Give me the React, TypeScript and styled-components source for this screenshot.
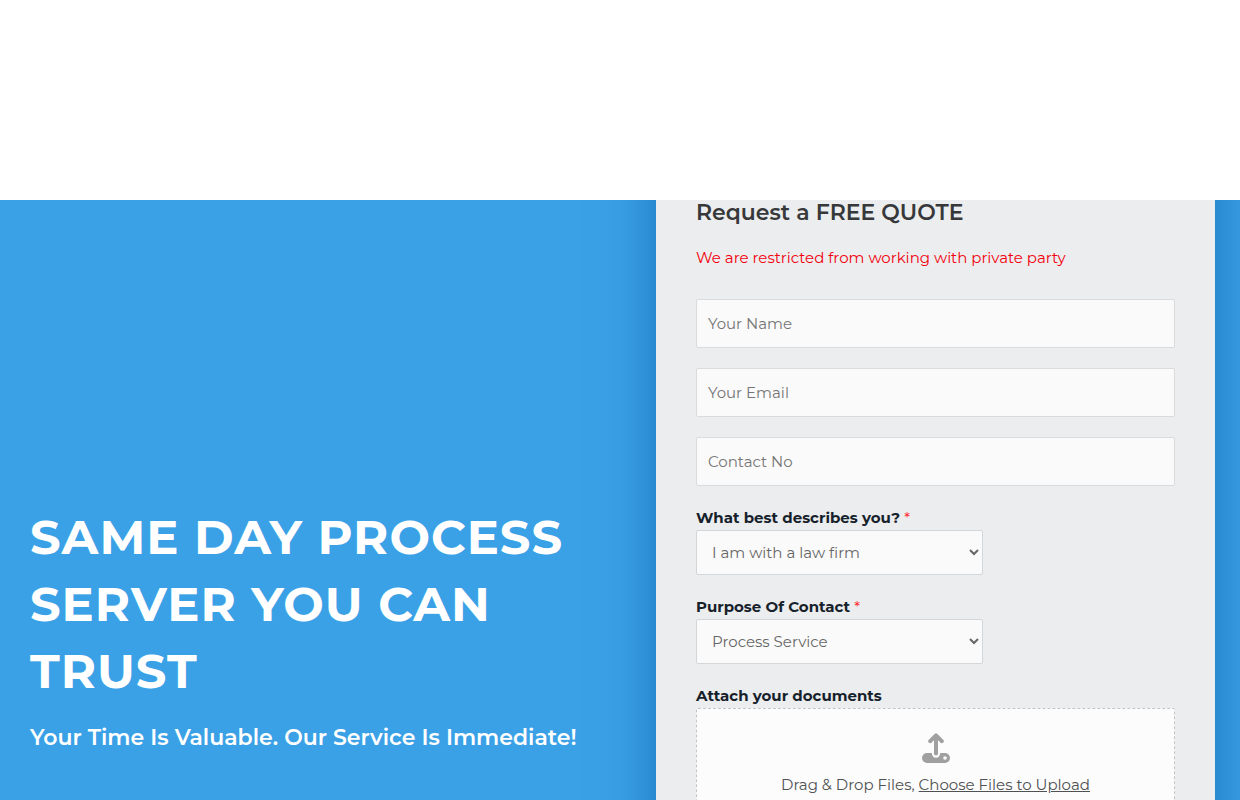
import React from "react";
import styled, { createGlobalStyle } from "styled-components";

const GlobalStyle = createGlobalStyle`
  *, *::before, *::after { box-sizing: border-box; }
  body {
    margin: 0;
    background: #ffffff;
    font-family: Montserrat, Inter, "Liberation Sans", sans-serif;
    font-size: 15px;
    line-height: 24px;
  }
`;

const Page = styled.div`
  display: flex;
  flex-direction: column;
  height: 100vh;
`;

const Header = styled.header`
  flex: none;
  height: 200px;
  background: #ffffff;
`;

const Hero = styled.main`
  flex: 1;
  min-height: 0;
  display: grid;
  grid-template-columns: 1fr 1fr;
  grid-template-rows: minmax(0, 1fr);
  overflow: hidden;
  background: #3ba1e6;
`;

const Intro = styled.section`
  display: flex;
  flex-direction: column;
  justify-content: flex-end;
  gap: 17px;
  padding: 0 30px 46px;
  color: #ffffff;
`;

const Title = styled.h1`
  margin: 0;
  font-size: 48px;
  line-height: 67px;
  font-weight: 700;
  letter-spacing: 1px;
  text-transform: uppercase;
`;

const Tagline = styled.p`
  margin: 0;
  font-size: 22px;
  line-height: 32px;
  font-weight: 600;
  white-space: nowrap;
`;

/* The card's top padding is tucked under the header. */
const QuoteCard = styled.form`
  align-self: start;
  margin: -60px 25px 0 36px;
  padding: 60px 40px 40px;
  background: #ebedee;
  box-shadow: 0 0 50px rgba(4, 85, 160, 0.6);
`;

const CardTitle = styled.h2`
  margin: 0 0 20px;
  font-size: 22px;
  line-height: 26px;
  font-weight: 600;
  color: #37383a;
`;

const Notice = styled.p`
  margin: 0 0 29px;
  color: #f2000d;
`;

const Fields = styled.div`
  display: flex;
  flex-direction: column;
  gap: 20px;
`;

const TextInput = styled.input`
  width: 100%;
  height: 49px;
  padding: 0 11px;
  border: 1px solid #d9dbdd;
  border-radius: 2px;
  background: #fafafa;
  color: #666666;
  font: inherit;
  &::placeholder { color: #757575; opacity: 1; }
`;

const Field = styled.div`
  display: flex;
  flex-direction: column;
`;

const Label = styled.label`
  font-weight: 700;
  color: #16212b;
`;

const Required = styled.span`
  font-weight: 400;
  color: #ff1a2b;
`;

const Select = styled.select`
  width: 60%;
  height: 45px;
  padding: 0 0 0 11px;
  border: 1px solid #d4d7da;
  border-radius: 2px;
  background: #fafafa;
  color: #666666;
  font: inherit;
`;

const DropZone = styled.div`
  display: flex;
  flex-direction: column;
  align-items: center;
  gap: 10px;
  min-height: 130px;
  padding-top: 24px;
  border: 1px dashed #c2c5c8;
  border-radius: 2px;
  background: #fcfcfc;
  color: #4f5152;
`;

const DropText = styled.p`
  margin: 0;
`;

const BrowseLink = styled.a`
  color: inherit;
  text-decoration: underline;
`;

const UploadIcon = () => (
  <svg width="28" height="30" viewBox="0 0 28 30" aria-hidden="true">
    <path
      d="M14 20.5V3M8.2 8.2L14 2.4l5.8 5.8"
      fill="none"
      stroke="#a0a0a0"
      strokeWidth="4"
      strokeLinecap="round"
      strokeLinejoin="round"
    />
    <path
      fill="#a0a0a0"
      fillRule="evenodd"
      d="M5 20H9.8C10 23 11.5 24.8 14 24.8S18 23 18.2 20H23A5 5 0 0 1 23 30H5A5 5 0 0 1 5 20ZM23 23.2A1.8 1.8 0 1 0 23 26.8A1.8 1.8 0 1 0 23 23.2Z"
    />
  </svg>
);

export default function App() {
  return (
    <>
      <GlobalStyle />
      <Page>
        <Header />
        <Hero>
          <Intro>
            <Title>Same Day Process Server You Can Trust</Title>
            <Tagline>Your Time Is Valuable. Our Service Is Immediate!</Tagline>
          </Intro>
          <QuoteCard>
            <CardTitle>Request a FREE QUOTE</CardTitle>
            <Notice>We are restricted from working with private party</Notice>
            <Fields>
              <TextInput type="text" placeholder="Your Name" aria-label="Your Name" />
              <TextInput type="email" placeholder="Your Email" aria-label="Your Email" />
              <TextInput type="tel" placeholder="Contact No" aria-label="Contact No" />
              <Field>
                <Label htmlFor="role">
                  What best describes you? <Required>*</Required>
                </Label>
                <Select id="role" required>
                  <option>I am with a law firm</option>
                </Select>
              </Field>
              <Field>
                <Label htmlFor="purpose">
                  Purpose Of Contact <Required>*</Required>
                </Label>
                <Select id="purpose" required>
                  <option>Process Service</option>
                </Select>
              </Field>
              <Field>
                <Label as="span">Attach your documents</Label>
                <DropZone>
                  <UploadIcon />
                  <DropText>
                    Drag &amp; Drop Files, <BrowseLink href="#upload">Choose Files to Upload</BrowseLink>
                  </DropText>
                </DropZone>
              </Field>
            </Fields>
          </QuoteCard>
        </Hero>
      </Page>
    </>
  );
}
